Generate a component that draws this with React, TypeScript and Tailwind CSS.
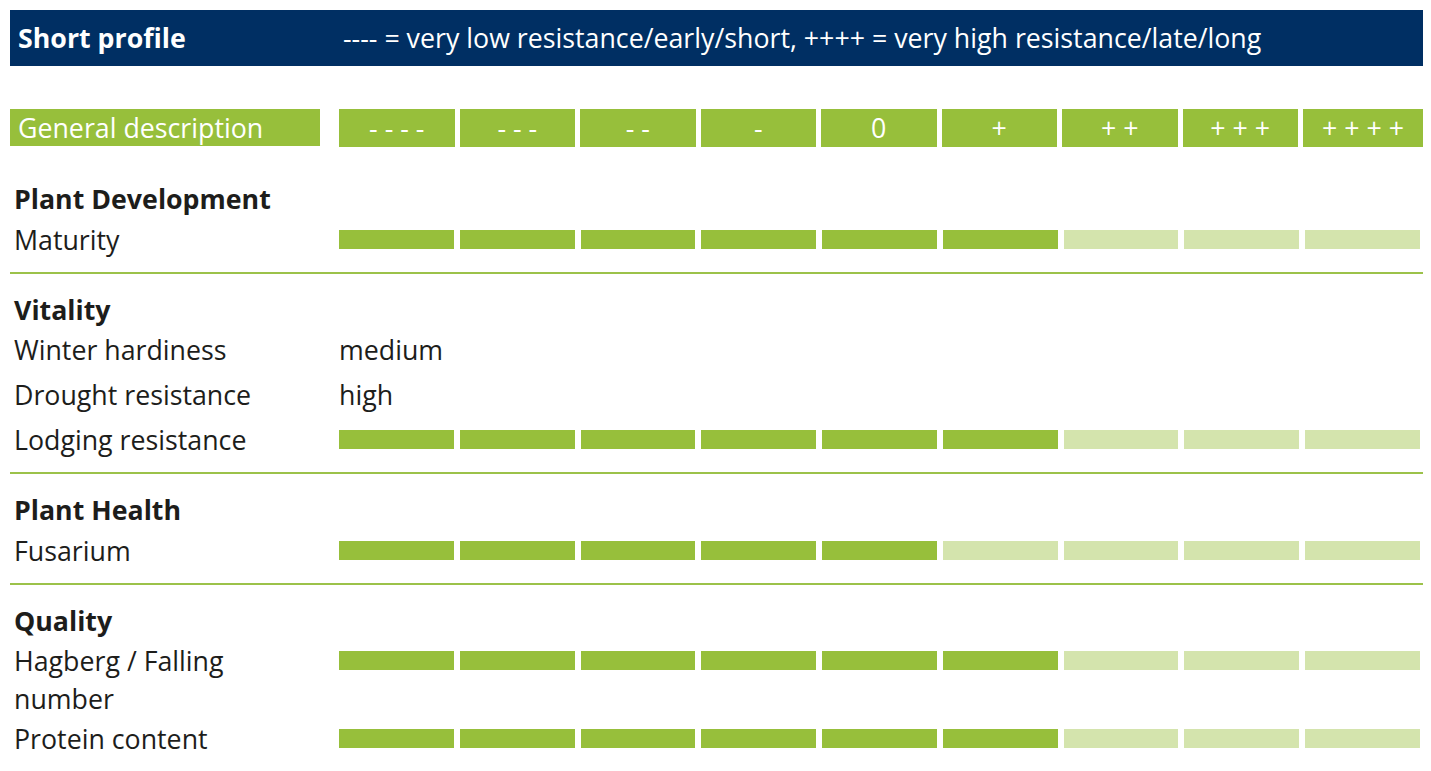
import React from 'react';

type Row = {
    label: string,
    value?: string,
    level?: number
}

type Section = {
    title: string,
    rows: Row[]
}

const scale = ['- - - -', '- - -', '- -', '-', '0', '+', '+ +', '+ + +', '+ + + +'];

const sections: Section[] = [
    { title: 'Plant Development', rows: [{ label: 'Maturity', level: 6 }] },
    {
        title: 'Vitality',
        rows: [
            { label: 'Winter hardiness', value: 'medium' },
            { label: 'Drought resistance', value: 'high' },
            { label: 'Lodging resistance', level: 6 },
        ]
    },
    { title: 'Plant Health', rows: [{ label: 'Fusarium', level: 5 }] },
    {
        title: 'Quality',
        rows: [
            { label: 'Hagberg / Falling number', level: 6 },
            { label: 'Protein content', level: 6 },
        ]
    },
];

const Bars = ({ level }: { level: number }) => {
    return (
        <div className="grid grid-cols-9 gap-[6px] w-[1081px] mt-[9px]">
            {scale.map((_, i) => (
                <div key={i} className={`h-[19px] ${i < level ? 'bg-[#97bf3b]' : 'bg-[#d4e4ad]'}`} />
            ))}
        </div>
    )
}

const ProfileRow = ({ row }: { row: Row }) => {
    return (
        <div className="flex items-start min-h-[42px]">
            <div className="w-[329px] shrink-0 pl-[4px] pr-[20px]">{row.label}</div>
            {row.value && <div>{row.value}</div>}
            {row.level !== undefined && <Bars level={row.level} />}
        </div>
    )
}

const App = () => {
    return (
        <div className="w-[1431px] h-[771px] bg-white overflow-hidden text-[26.75px] leading-[37.5px] text-[#1d1d1b]" style={{ fontFamily: '"Open Sans", sans-serif' }}>
            <div className="w-[1413px] ml-[10px] pt-[10px]">

                {/* header bar */}
                <div className="flex items-center h-[56px] bg-[#002f63] text-white">
                    <div className="w-[329px] shrink-0 pl-[8px] font-bold">Short profile</div>
                    <div className="pl-[4px] whitespace-nowrap">---- = very low resistance/early/short, ++++ = very high resistance/late/long</div>
                </div>

                {/* scale */}
                <div className="flex mt-[43px] h-[37px] text-white">
                    <div className="w-[310px] bg-[#97bf3b] pl-[8px] flex items-center">General description</div>
                    <div className="w-[19px]" />
                    <div className="grid grid-cols-[repeat(8,115.5px)_120px] gap-[5px] w-[1084px]">
                        {scale.map((s) => (
                            <div key={s} className="bg-[#97bf3b] flex items-center justify-center">{s}</div>
                        ))}
                    </div>
                </div>

                {/* sections */}
                <div className="mt-[34px]">
                    {sections.map((sec, i) => (
                        <div key={sec.title}>
                            {i > 0 && <div className="h-[2px] bg-[#9cc24a] mt-[9px] mb-[17px]" />}
                            <div className="flex flex-col gap-[3px]">
                                <div className="pl-[4px] font-bold">{sec.title}</div>
                                {sec.rows.map((row) => (
                                    <ProfileRow key={row.label} row={row} />
                                ))}
                            </div>
                        </div>
                    ))}
                </div>
            </div>
        </div>
    )
}

export default App
